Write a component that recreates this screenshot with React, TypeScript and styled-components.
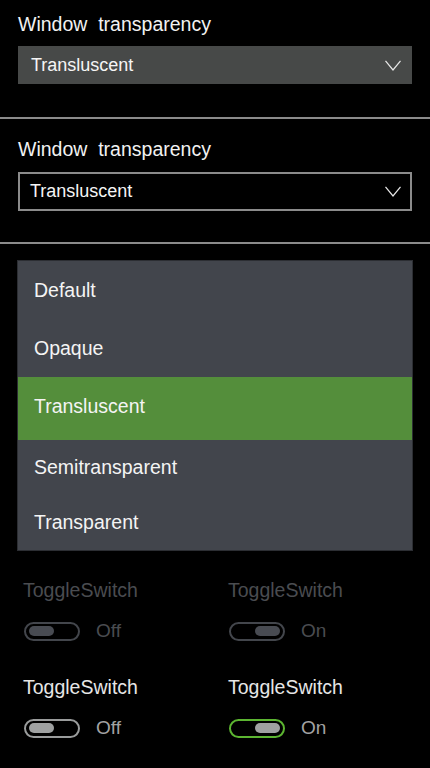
import React from "react";
import styled, { createGlobalStyle, css } from "styled-components";

const Global = createGlobalStyle`
  html, body { margin: 0; padding: 0; background: #000; }
  body { font-family: "Liberation Sans", Arial, sans-serif; color: #fff; width: 430px; height: 768px; overflow: hidden; }
`;

const Page = styled.div`
  display: flex;
  flex-direction: column;
  width: 430px;
`;

const Section = styled.section<{ $top: number; $bottom: number }>`
  display: flex;
  flex-direction: column;
  padding: ${(p) => p.$top}px 18px ${(p) => p.$bottom}px 18px;
  border-bottom: 2px solid #8b8b8b;
`;

const Label = styled.div`
  font-size: 19.5px;
  line-height: 22px;
  color: #f2f2f2;
  white-space: pre;
`;

const Combo = styled.div<{ $variant: "filled" | "outlined" }>`
  display: flex;
  align-items: center;
  justify-content: space-between;
  box-sizing: border-box;
  width: 394px;
  font-size: 18px;
  color: #f5f5f5;
  ${(p) =>
    p.$variant === "filled"
      ? css`
          margin-top: 11px;
          height: 38px;
          background: #474948;
          padding: 0 11px 0 13px;
        `
      : css`
          margin-top: 12px;
          height: 39px;
          background: #000;
          border: 2px solid #8b8b8b;
          padding: 0 9px 0 10px;
        `}
`;

const Chevron = () => (
  <svg width="16" height="11" viewBox="0 0 16 11" aria-hidden="true">
    <polyline points="0.5,0.8 8,10 15.5,0.8" fill="none" stroke="#e8e8e8" strokeWidth="1.2" />
  </svg>
);

const List = styled.ul`
  list-style: none;
  margin: 16px 0 0 17px;
  padding: 0;
  width: 396px;
  box-sizing: border-box;
  background: #42454c;
  border: 1px solid #2c2e33;
  display: flex;
  flex-direction: column;
`;

const Item = styled.li<{ $h: number; $selected?: boolean }>`
  height: ${(p) => p.$h}px;
  display: flex;
  align-items: center;
  padding: 0 0 ${(p) => (p.$selected ? 4 : 0)}px 16px;
  box-sizing: border-box;
  font-size: 19.5px;
  color: #f4f4f4;
  background: ${(p) => (p.$selected ? "#548e3b" : "transparent")};
`;

const ToggleGrid = styled.div`
  display: grid;
  grid-template-columns: 205px 205px;
  row-gap: 34px;
  padding: 28px 0 0 23px;
`;

const Cell = styled.div`
  display: flex;
  flex-direction: column;
  gap: 19px;
`;

const ToggleLabel = styled.div<{ $disabled?: boolean }>`
  font-size: 19.5px;
  line-height: 22px;
  color: ${(p) => (p.$disabled ? "#4a4c50" : "#e6e6e6")};
`;

const SwitchRow = styled.div`
  display: flex;
  align-items: center;
  gap: 16px;
  padding-left: 1px;
`;

const Track = styled.div<{ $on: boolean; $disabled?: boolean }>`
  box-sizing: border-box;
  width: 56px;
  height: 19px;
  border-radius: 10px;
  border: 2px solid
    ${(p) => (p.$disabled ? "#43464c" : p.$on ? "#5cb531" : "#9a9c9c")};
  display: flex;
  align-items: center;
  justify-content: ${(p) => (p.$on ? "flex-end" : "flex-start")};
  padding: 0 3px;
`;

const Thumb = styled.div<{ $disabled?: boolean }>`
  width: 25px;
  height: 10px;
  border-radius: 5px;
  background: ${(p) => (p.$disabled ? "#484b52" : "#9fa1a1")};
`;

const State = styled.span<{ $disabled?: boolean }>`
  font-size: 19px;
  line-height: 22px;
  color: ${(p) => (p.$disabled ? "#4a4c50" : "#a3a3a3")};
`;

type ToggleProps = { on: boolean; disabled?: boolean };

const Toggle = ({ on, disabled }: ToggleProps) => (
  <Cell>
    <ToggleLabel $disabled={disabled}>ToggleSwitch</ToggleLabel>
    <SwitchRow>
      <Track $on={on} $disabled={disabled}>
        <Thumb $disabled={disabled} />
      </Track>
      <State $disabled={disabled}>{on ? "On" : "Off"}</State>
    </SwitchRow>
  </Cell>
);

const items: { label: string; h: number; selected?: boolean }[] = [
  { label: "Default", h: 58 },
  { label: "Opaque", h: 58 },
  { label: "Transluscent", h: 63, selected: true },
  { label: "Semitransparent", h: 55 },
  { label: "Transparent", h: 55 },
];

export default function App() {
  return (
    <Page>
      <Global />
      <Section $top={13} $bottom={33}>
        <Label>{"Window  transparency"}</Label>
        <Combo $variant="filled">
          <span>Transluscent</span>
          <Chevron />
        </Combo>
      </Section>
      <Section $top={19} $bottom={31}>
        <Label>{"Window  transparency"}</Label>
        <Combo $variant="outlined">
          <span>Transluscent</span>
          <Chevron />
        </Combo>
      </Section>
      <List>
        {items.map((it) => (
          <Item key={it.label} $h={it.h} $selected={it.selected}>
            {it.label}
          </Item>
        ))}
      </List>
      <ToggleGrid>
        <Toggle on={false} disabled />
        <Toggle on disabled />
        <Toggle on={false} />
        <Toggle on />
      </ToggleGrid>
    </Page>
  );
}
